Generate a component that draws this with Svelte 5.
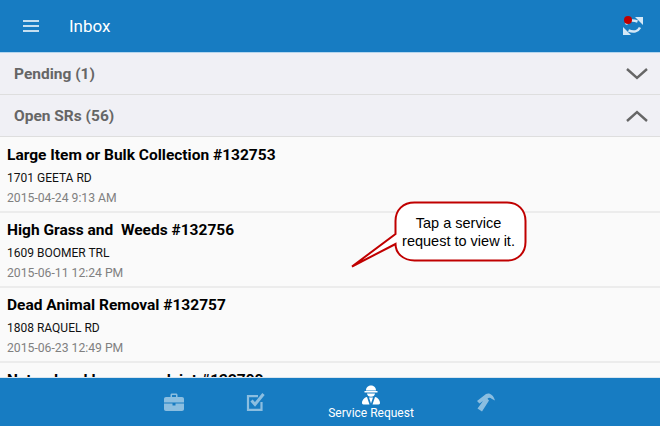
<script lang="ts">
	const sections = [
		{ label: 'Pending (1)', open: false },
		{ label: 'Open SRs (56)', open: true }
	];

	const requests = [
		{ title: 'Large Item or Bulk Collection #132753', address: '1701 GEETA RD', date: '2015-04-24 9:13 AM' },
		{ title: 'High Grass and\u00a0 Weeds #132756', address: '1609 BOOMER TRL', date: '2015-06-11 12:24 PM' },
		{ title: 'Dead Animal Removal #132757', address: '1808 RAQUEL RD', date: '2015-06-23 12:49 PM' },
		{ title: 'Natural and lawn complaint #132790', address: '', date: '' }
	];
</script>

<div class="screen">
	<header class="topbar">
		<svg class="menu" width="16" height="12" viewBox="0 0 16 12">
			<path d="M0 1h16M0 6h16M0 11h16" stroke="#fff" stroke-width="1.7" />
		</svg>
		<span class="title">Inbox</span>
		<svg class="sync" width="20" height="20" viewBox="0 0 20 20">
			<path d="M3 8.500C5 4.500 9 3.500 14.500 5.500" fill="none" stroke="#d5e8f6" stroke-width="2.600" />
			<path d="M12 1H20V9Z" fill="#d5e8f6" />
			<path d="M17 11.500C15 15.500 10.500 16.500 5.500 14.500" fill="none" stroke="#d5e8f6" stroke-width="2.600" />
			<path d="M8 19H0V11Z" fill="#d5e8f6" />
		</svg>
		<span class="dot"></span>
	</header>

	{#each sections as section}
		<div class="section">
			<span>{section.label}</span>
			<svg width="22" height="12" viewBox="0 0 22 12">
				<path d={section.open ? 'M1 11 11 2l10 9' : 'M1 1l10 9 10-9'} fill="none" stroke="#666" stroke-width="2.4" />
			</svg>
		</div>
	{/each}

	<main class="list">
		{#each requests as request}
			<div class="item">
				<div class="item-title">{request.title}</div>
				<div class="address">{request.address}</div>
				<div class="date">{request.date}</div>
			</div>
		{/each}
	</main>

	<nav class="tabs">
		<div class="tab dim">
			<svg width="20" height="18" viewBox="0 0 20 18">
				<path d="M6.500 4V2C6.500 1 7.200.5 8 .5h4c.8 0 1.500.5 1.500 1.500V4H18c1.200 0 2 .8 2 2v3.500H0V6c0-1.200.8-2 2-2ZM8 4h4V2H8ZM0 10.500h8.500V12.500h3V10.500H20V16c0 1-.8 2-2 2H2c-1.200 0-2-1-2-2Z" fill="#fff" />
			</svg>
		</div>
		<div class="tab dim">
			<svg width="20" height="18" viewBox="0 0 20 18">
				<path d="M15.500 9V16.800H2V3.200H12" fill="none" stroke="#fff" stroke-width="2.200" />
				<path d="M5.500 7.500 9 11.500 17.500 1" fill="none" stroke="#fff" stroke-width="3" />
			</svg>
		</div>
		<div class="tab active">
			<svg width="20" height="20" viewBox="0 0 20 20">
				<path d="M5 5.500C5 2 7.500 .5 10 .5S15 2 15 5.500ZM3.500 6H16.500V7.500H3.500ZM6 8.500H14C14 10.500 12 11.800 10 11.800S6 10.500 6 8.500ZM8 12.500H12L10 18.500ZM6 12C3 12.500 1 15.500 1 18 1 19 2 19.500 3.500 19.500H8.500ZM14 12C17 12.500 19 15.500 19 18 19 19 18 19.500 16.500 19.500H11.500Z" fill="#fff" />
			</svg>
			<span>Service Request</span>
		</div>
		<div class="tab dim">
			<svg width="20" height="20" viewBox="0 0 20 20">
				<path d="M1 8 10 1C13 -.5 17 1 19 7.500L16 6C14 4.500 12.500 4.500 11.500 5.800L13 7.500 6 18.500 1.500 15.500 7 8 3.500 10.500Z" fill="#fff" />
			</svg>
		</div>
	</nav>

	<div class="callout">
		<svg width="180" height="70" viewBox="0 0 180 70">
			<path d="M63.500 1.500H156C167 1.500 174.500 9 174.500 20V41C174.500 52 167 59.500 156 59.500H63.500C52 59.500 44.500 52 44.500 43L1 65.500 44.500 33V20C44.500 9 52 1.500 63.500 1.500Z" fill="#fff" stroke="#c00000" stroke-width="2" />
		</svg>
		<p>Tap a service<br />request to view it.</p>
	</div>
</div>

<style>
	:global(body) {
		margin: 0;
		overflow: hidden;
	}

	.screen {
		position: relative;
		display: flex;
		flex-direction: column;
		width: 660px;
		height: 426px;
		overflow: hidden;
		background: #fafafa;
		font-family: Roboto, sans-serif;
	}

	.topbar {
		position: relative;
		display: flex;
		align-items: center;
		flex: 0 0 52px;
		padding: 0 17px 0 23px;
		background: #177cc2;
		border-bottom: 1px solid #b5d6ee;
	}

	.title {
		margin-left: 30px;
		color: #fff;
		font-size: 17px;
		font-weight: 400;
	}

	.sync {
		margin-left: auto;
		margin-top: -1px;
	}

	.dot {
		position: absolute;
		top: 16px;
		right: 28px;
		width: 8px;
		height: 8px;
		border-radius: 50%;
		background: #c00000;
	}

	.section {
		display: flex;
		align-items: center;
		justify-content: space-between;
		flex: 0 0 41px;
		padding: 0 12px 0 14px;
		background: #f0f0f5;
		border-bottom: 1px solid #dedede;
		color: #666;
		font-size: 15.500px;
		font-weight: 700;
	}

	.section span {
		margin-top: 1px;
	}

	.list {
		flex: 1;
		min-height: 0;
		padding-top: 1px;
		overflow: hidden;
	}

	.item {
		box-sizing: border-box;
		height: 75px;
		padding: 7px 7px 0;
		border-bottom: 2px solid #ececec;
	}

	.item-title {
		height: 21px;
		color: #000;
		font-size: 15.500px;
		font-weight: 700;
		line-height: 21px;
	}

	.address {
		height: 20px;
		margin-top: 2px;
		color: #111;
		font-size: 12px;
		line-height: 20px;
	}

	.date {
		height: 20px;
		color: #808080;
		font-size: 12.200px;
		line-height: 20px;
	}

	.tabs {
		display: flex;
		justify-content: center;
		flex: 0 0 49px;
		box-sizing: border-box;
		background: #177cc2;
		border-top: 1px solid #d8e6f0;
	}

	.tab {
		display: flex;
		flex-direction: column;
		align-items: center;
		padding: 7px 31px 0;
		color: #fff;
		font-size: 12px;
	}

	.tab.dim {
		padding-top: 15px;
		opacity: 0.5;
	}

	.tab.active span {
		margin-top: 1px;
		line-height: 14px;
	}

	.callout {
		position: absolute;
		top: 201px;
		left: 351px;
		width: 180px;
		height: 70px;
	}

	.callout svg {
		display: block;
	}

	.callout p {
		position: absolute;
		top: 13px;
		left: 42px;
		width: 131px;
		margin: 0;
		color: #000;
		font-family: "Liberation Sans", Arial, sans-serif;
		font-size: 14.500px;
		line-height: 18px;
		text-align: center;
	}
</style>
